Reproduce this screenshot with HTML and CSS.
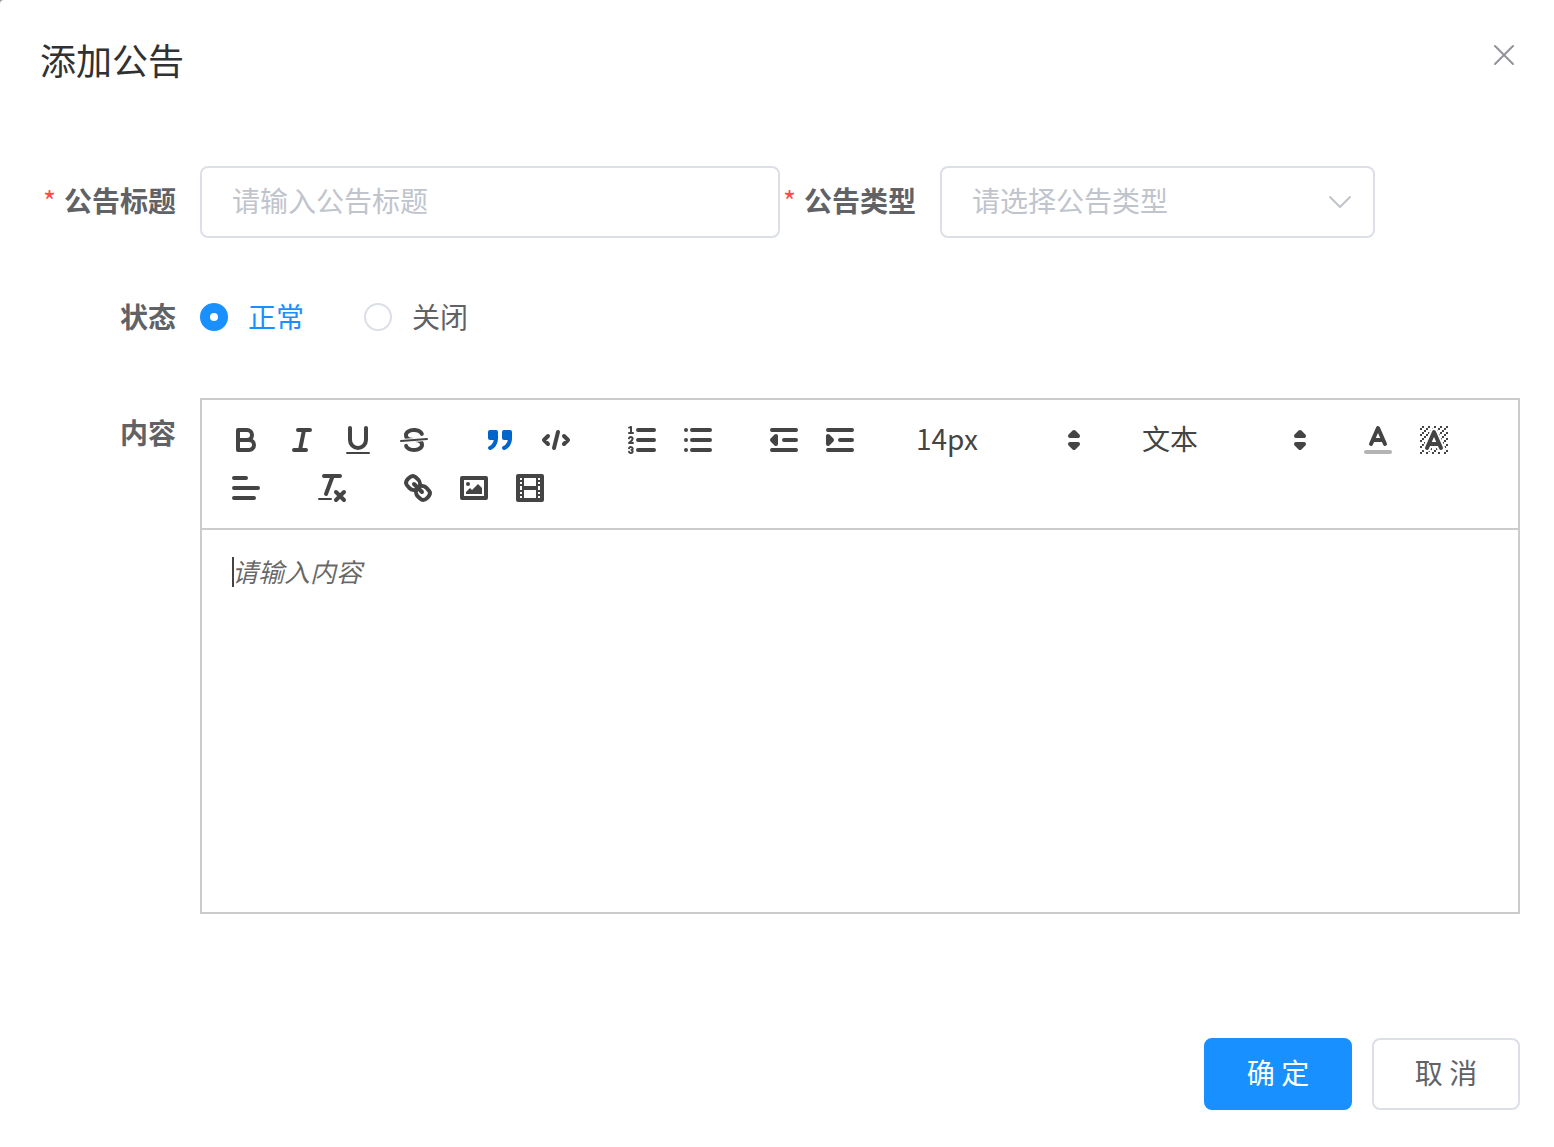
FILE: index.html
```html
<!DOCTYPE html>
<html lang="zh-CN">
<head>
<meta charset="utf-8">
<meta name="viewport" content="width=device-width, initial-scale=1">
<title>添加公告</title>
<link rel="stylesheet" href="styles.css">
</head>
<body>
<main class="dialog" role="dialog" aria-labelledby="dialog-title">
  <header class="dialog-header">
    <h1 class="dialog-title" id="dialog-title">添加公告</h1>
    <button class="dialog-close" type="button" aria-label="关闭对话框">
      <svg viewBox="0 0 24 24" width="24" height="24"><path d="M3 3L21 21M21 3L3 21"/></svg>
    </button>
  </header>

  <form class="form" id="notice-form">
    <div class="form-row">
      <div class="form-item">
        <label class="form-label required" for="notice-title">公告标题</label>
        <input class="text-input" id="notice-title" type="text" placeholder="请输入公告标题">
      </div>
      <div class="form-item">
        <label class="form-label required" for="notice-type">公告类型</label>
        <div class="select-box">
          <select class="select-input" id="notice-type">
            <option value="">请选择公告类型</option>
            <option>通知</option>
            <option>公告</option>
          </select>
          <svg class="select-arrow" viewBox="0 0 24 24" width="24" height="24"><path d="M2 7L12 17L22 7"/></svg>
        </div>
      </div>
    </div>

    <div class="form-item" role="radiogroup" aria-labelledby="status-label">
      <span class="form-label" id="status-label">状态</span>
      <div class="radio-group">
        <label class="radio"><input type="radio" name="status" checked><span>正常</span></label>
        <label class="radio"><input type="radio" name="status"><span>关闭</span></label>
      </div>
    </div>

    <div class="form-item">
      <label class="form-label" for="notice-content">内容</label>
      <div class="editor">
        <div class="toolbar" role="toolbar" aria-label="文本格式">
          <div class="tool-group">
            <button class="tool" type="button" aria-label="加粗"><svg viewBox="0 0 18 18"><path class="s" d="M5,4H9.5A2.5,2.5,0,0,1,12,6.5v0A2.5,2.5,0,0,1,9.5,9H5V4Z"/><path class="s" d="M5,9h5.5A2.5,2.5,0,0,1,13,11.5v0A2.5,2.5,0,0,1,10.5,14H5V9Z"/></svg></button>
            <button class="tool" type="button" aria-label="斜体"><svg viewBox="0 0 18 18"><path class="s" d="M7 4H13M5 14H11M8 14L10 4"/></svg></button>
            <button class="tool" type="button" aria-label="下划线"><svg viewBox="0 0 18 18"><path class="s" d="M5,3V9a4.012,4.012,0,0,0,4,4H9a4.012,4.012,0,0,0,4-4V3"/><rect class="f" height="1" rx="0.5" ry="0.5" width="12" x="3" y="15"/></svg></button>
            <button class="tool" type="button" aria-label="删除线"><svg viewBox="0 0 18 18"><path class="s thin" d="M15.5 8.5L2.5 9.5"/><path class="f" d="M9.007,8C6.542,7.791,6,7.519,6,6.5,6,5.792,7.283,5,9,5c1.571,0,2.765.679,2.969,1.309a1,1,0,0,0,1.9-.617C13.356,4.106,11.354,3,9,3,6.2,3,4,4.538,4,6.5a3.2,3.2,0,0,0,.5,1.843Z"/><path class="f" d="M8.984,10C11.457,10.208,12,10.479,12,11.5c0,0.708-1.283,1.5-3,1.5-1.571,0-2.765-.679-2.969-1.309a1,1,0,1,0-1.9.617C4.644,13.894,6.646,15,9,15c2.8,0,5-1.538,5-3.5a3.2,3.2,0,0,0-.5-1.843Z"/></svg></button>
          </div>
          <div class="tool-group">
            <button class="tool active" type="button" aria-label="引用" aria-pressed="true"><svg viewBox="0 0 18 18"><rect class="f s" height="3" width="3" x="4" y="5"/><rect class="f s" height="3" width="3" x="11" y="5"/><path class="f s" fill-rule="evenodd" d="M7,8c0,4.031-3,5-3,5"/><path class="f s" fill-rule="evenodd" d="M14,8c0,4.031-3,5-3,5"/></svg></button>
            <button class="tool" type="button" aria-label="代码块"><svg viewBox="0 0 18 18"><path class="s" d="M5 7L3 9L5 11M13 7L15 9L13 11M10 5L8 13"/></svg></button>
          </div>
          <div class="tool-group">
            <button class="tool" type="button" aria-label="有序列表"><svg viewBox="0 0 18 18"><path class="s" d="M7 4H15M7 9H15M7 14H15"/><path class="s thin" d="M2.5 5.5H4.5"/><path class="f" d="M3.5,6A0.5,0.5,0,0,1,3,5.5V3.085l-0.276.138A0.5,0.5,0,0,1,2.053,3c-0.124-.247-0.023-0.324.224-0.447l1-.5A0.5,0.5,0,0,1,4,2.5v3A0.5,0.5,0,0,1,3.5,6Z"/><path class="s thin" d="M4.5,10.5h-2c0-.234,1.85-1.076,1.85-2.234A0.959,0.959,0,0,0,2.5,8.156"/><path class="s thin" d="M2.5,14.846a0.959,0.959,0,0,0,1.85-.11A0.7,0.7,0,0,0,3.75,14a0.688,0.688,0,0,0,.6-0.736,0.959,0.959,0,0,0-1.85-.109"/></svg></button>
            <button class="tool" type="button" aria-label="无序列表"><svg viewBox="0 0 18 18"><path class="s" d="M6 4H15M6 9H15M6 14H15M3 4H3M3 9H3M3 14H3"/></svg></button>
          </div>
          <div class="tool-group">
            <button class="tool" type="button" aria-label="减少缩进"><svg viewBox="0 0 18 18"><path class="s" d="M3 14H15M3 4H15M9 9H15"/><path class="f s" d="M5 7V11L3 9Z"/></svg></button>
            <button class="tool" type="button" aria-label="增加缩进"><svg viewBox="0 0 18 18"><path class="s" d="M3 14H15M3 4H15M9 9H15"/><path class="f s" d="M3 7V11L5 9Z"/></svg></button>
          </div>
          <div class="tool-group">
            <div class="picker">
              <select aria-label="字号"><option>14px</option><option>16px</option><option>18px</option></select>
              <svg viewBox="0 0 18 18"><path class="s" d="M7 11L9 13L11 11ZM7 7L9 5L11 7Z"/></svg>
            </div>
          </div>
          <div class="tool-group">
            <div class="picker">
              <select aria-label="标题级别"><option>文本</option><option>标题1</option><option>标题2</option></select>
              <svg viewBox="0 0 18 18"><path class="s" d="M7 11L9 13L11 11ZM7 7L9 5L11 7Z"/></svg>
            </div>
          </div>
          <div class="tool-group">
            <button class="tool" type="button" aria-label="文字颜色"><svg viewBox="0 0 18 18"><path class="s faded" d="M3 15H15"/><path class="s" d="M5.5 11L9 3L12.5 11M11.63 9H6.38"/></svg></button>
            <button class="tool" type="button" aria-label="背景颜色"><svg viewBox="0 0 18 18"><path class="f" d="M6 6.868V6H5V7H5.942ZM4 4h1v1h-1zM6.817 5H6V6H6.38ZM2 6h1v1h-1zM3 5h1v1h-1zM4 7h1v1h-1zM4 11.439V11H3V12H3.755ZM2 12h1v1h-1zM2 9h1v1h-1zM2 15h1v1h-1zM4.63 10H4V11H4.192ZM3 8h1v1h-1zM10.832,4.2L11,4.582V4H10.708A1.948,1.948,0,0,1,10.832,4.2ZM7,4.582L7.168,4.2A1.929,1.929,0,0,1,7.292,4H7ZM8,13H7.683l-0.351.8a1.933,1.933,0,0,1-.124.2H8ZM12 2h1v1h-1zM11 3h1v1h-1zM9,3H8V3.282A1.985,1.985,0,0,1,9,3ZM2 3h1v1h-1zM6 2h1v1h-1zM3 2h1v1h-1zM5 3h1v1h-1zM9 2h1v1h-1zM15 14h1v1h-1zM13.447 10.174L13.808 11H14V10H13.37ZM13 7h1v1h-1zM15 5h1v1h-1zM14 6h1v1h-1zM15 8h1v1h-1zM14 9h1v1h-1zM3.775,14H3v1H4V14.314A1.97,1.97,0,0,1,3.775,14ZM14 3h1v1h-1zM12 6.868V6H11.62ZM15 2h1v1h-1zM12 5h1v1h-1zM13 4h1v1h-1zM12.933 9H13V8H12.495ZM9 14h1v1h-1zM8 15h1v1h-1zM6,14.926V15H7V14.316A1.993,1.993,0,0,1,6,14.926ZM5 15h1v1h-1zM10.668,13.8L10.317,13H10v1h0.792A1.947,1.947,0,0,1,10.668,13.8ZM11 15h1v1h-1zM14.332,12.2a1.99,1.99,0,0,1,.166.8H15V12H14.245ZM14 15h1v1h-1zM15 11h1v1h-1z"/><path class="s" d="M5.5 13L9 5L12.5 13M11.63 11H6.38"/></svg></button>
          </div>
          <div class="tool-group">
            <button class="tool" type="button" aria-label="对齐方式"><svg viewBox="0 0 18 18"><path class="s" d="M3 9H15M3 14H13M3 4H9"/></svg></button>
          </div>
          <div class="tool-group">
            <button class="tool" type="button" aria-label="清除格式"><svg viewBox="0 0 18 18"><path class="s" d="M5 3H13M6 12L9.35 3M11 11L15 15M15 11L11 15"/><rect class="f" height="1" rx="0.5" ry="0.5" width="7" x="2" y="14"/></svg></button>
          </div>
          <div class="tool-group">
            <button class="tool" type="button" aria-label="链接"><svg viewBox="0 0 18 18"><path class="s" d="M7 7L11 11"/><path class="s" d="M8.9,4.577a3.476,3.476,0,0,1,.36,4.679A3.476,3.476,0,0,1,4.577,8.9C3.185,7.5,2.035,6.4,4.217,4.217S7.5,3.185,8.9,4.577Z"/><path class="s" d="M13.423,9.1a3.476,3.476,0,0,0-4.679-.36,3.476,3.476,0,0,0,.36,4.679c1.392,1.392,2.5,2.542,4.679.36S14.815,10.5,13.423,9.1Z"/></svg></button>
            <button class="tool" type="button" aria-label="图片"><svg viewBox="0 0 18 18"><rect class="s" height="10" width="12" x="3" y="4"/><circle class="f" cx="6" cy="7" r="1"/><path class="f" d="M5 12V11L7 9L8 10L11 7L13 9V12Z"/></svg></button>
            <button class="tool" type="button" aria-label="视频"><svg viewBox="0 0 18 18"><rect class="s" height="12" width="12" x="3" y="3"/><path class="f" d="M5 3h1v12h-1zM12 3h1v12h-1zM5 8h8v2h-8zM3 5h3v1h-3zM3 7h3v1h-3zM3 10h3v1h-3zM3 12h3v1h-3zM12 5h3v1h-3zM12 7h3v1h-3zM12 10h3v1h-3zM12 12h3v1h-3z"/></svg></button>
          </div>
        </div>
        <div class="editor-body">
          <textarea class="editor-input" id="notice-content" placeholder="请输入内容"></textarea>
          <span class="caret" aria-hidden="true"></span>
        </div>
      </div>
    </div>
  </form>

  <footer class="dialog-footer">
    <button class="button primary" type="submit" form="notice-form">确 定</button>
    <button class="button" type="button">取 消</button>
  </footer>
</main>
</body>
</html>
```
FILE: styles.css
```css
*,
*::before,
*::after {
  box-sizing: border-box;
}

html {
  background: #999;
}

body {
  margin: 0;
  color: #606266;
  font-family: "Noto Sans CJK SC", sans-serif;
  font-size: 28px;
  line-height: 40px;
}

button,
input,
select,
textarea {
  margin: 0;
  font: inherit;
  color: inherit;
}

button,
select {
  cursor: pointer;
}

.dialog {
  display: flex;
  flex-direction: column;
  min-height: 100vh;
  border-top-left-radius: 4px;
  background: #fff;
}

.dialog-header {
  display: flex;
  justify-content: space-between;
  align-items: flex-start;
  padding: 36px 36px 24px 40px;
}

.dialog-title {
  margin: 0;
  color: #303133;
  font-size: 36px;
  font-weight: 400;
  line-height: 46px;
}

.dialog-close {
  display: flex;
  padding: 7px 2px;
  border: 0;
  background: none;
}

.dialog-close svg {
  fill: none;
  stroke: #909399;
  stroke-width: 2;
  stroke-linecap: round;
}

.form {
  display: flex;
  flex-direction: column;
  gap: 44px;
  padding: 60px 34px 60px 40px;
}

.form-row {
  display: grid;
  grid-template-columns: 1fr 1fr;
}

.form-item {
  display: flex;
  align-items: flex-start;
  min-width: 0;
  min-height: 72px;
}

.form-label {
  flex: none;
  width: 160px;
  padding-right: 24px;
  font-weight: 700;
  line-height: 68px;
  text-align: right;
  white-space: nowrap;
}

.required::before {
  content: "*";
  margin-right: 8px;
  color: #ff4949;
  font-weight: 400;
}

.text-input {
  flex: 1;
  min-width: 0;
  height: 72px;
  padding: 0 30px 4px;
  border: 2px solid #dcdfe6;
  border-radius: 8px;
  background: #fff;
  outline: 0;
}

.text-input::placeholder {
  color: #c0c4cc;
  opacity: 1;
}

.select-box {
  display: grid;
  align-items: center;
  width: 435px;
}

.select-input,
.select-arrow {
  grid-area: 1 / 1;
}

.select-input {
  appearance: none;
  width: 100%;
  height: 72px;
  padding: 0 60px 4px 30px;
  border: 2px solid #dcdfe6;
  border-radius: 8px;
  background: #fff;
  color: #c0c4cc;
}

.select-arrow {
  justify-self: end;
  margin-right: 23px;
  fill: none;
  stroke: #c0c4cc;
  stroke-width: 2;
  stroke-linecap: round;
  stroke-linejoin: round;
  pointer-events: none;
}

.radio-group {
  display: flex;
  align-items: center;
  gap: 60px;
  height: 70px;
}

.radio {
  display: flex;
  align-items: center;
  gap: 20px;
}

.radio span {
  padding-bottom: 2px;
}

.radio input {
  appearance: none;
  width: 28px;
  height: 28px;
  border: 2px solid #dcdfe6;
  border-radius: 50%;
  background: #fff;
}

.radio input:checked {
  border: 10px solid #1890ff;
}

.radio input:checked + span {
  color: #1890ff;
}

.editor {
  flex: 1;
  min-width: 0;
  border: 2px solid #ccc;
}

.toolbar {
  display: flex;
  flex-wrap: wrap;
  column-gap: 30px;
  padding: 16px;
  border-bottom: 2px solid #ccc;
  color: #444;
}

.tool-group {
  display: flex;
}

.tool {
  display: flex;
  width: 56px;
  height: 48px;
  padding: 6px 10px;
  border: 0;
  background: none;
}

.tool svg,
.picker svg {
  width: 36px;
  height: 36px;
}

.tool.active {
  color: #06c;
}

.s {
  fill: none;
  stroke: currentColor;
  stroke-width: 2;
  stroke-linecap: round;
  stroke-linejoin: round;
}

.f,
.f.s,
.picker .s {
  fill: currentColor;
}

.thin {
  stroke-width: 1;
}

.faded {
  opacity: 0.4;
}

.picker {
  display: grid;
  align-items: center;
  width: 196px;
  height: 48px;
}

.picker select,
.picker svg {
  grid-area: 1 / 1;
}

.picker select {
  appearance: none;
  width: 100%;
  height: 48px;
  padding: 0 40px 4px 18px;
  border: 0;
  background: none;
}

.picker svg {
  justify-self: end;
  margin-right: 2px;
  pointer-events: none;
}

.editor-body {
  position: relative;
  display: flex;
}

.editor-input {
  width: 100%;
  height: 382px;
  padding: 24px 30px;
  border: 0;
  outline: 0;
  resize: none;
  background: none;
  color: #303133;
  font-size: 26px;
  line-height: 34px;
}

.editor-input::placeholder {
  color: rgba(0, 0, 0, 0.6);
  font-style: italic;
  opacity: 1;
}

.caret {
  position: absolute;
  top: 27px;
  left: 30px;
  width: 2px;
  height: 30px;
  background: #444;
  pointer-events: none;
}

.dialog-footer {
  display: flex;
  justify-content: flex-end;
  gap: 20px;
  padding: 64px 34px 37px;
}

.button {
  min-width: 148px;
  height: 72px;
  padding: 0 40px 4px;
  border: 2px solid #dcdfe6;
  border-radius: 8px;
  background: #fff;
  white-space: nowrap;
}

.button.primary {
  border-color: #1890ff;
  background: #1890ff;
  color: #fff;
}
```
